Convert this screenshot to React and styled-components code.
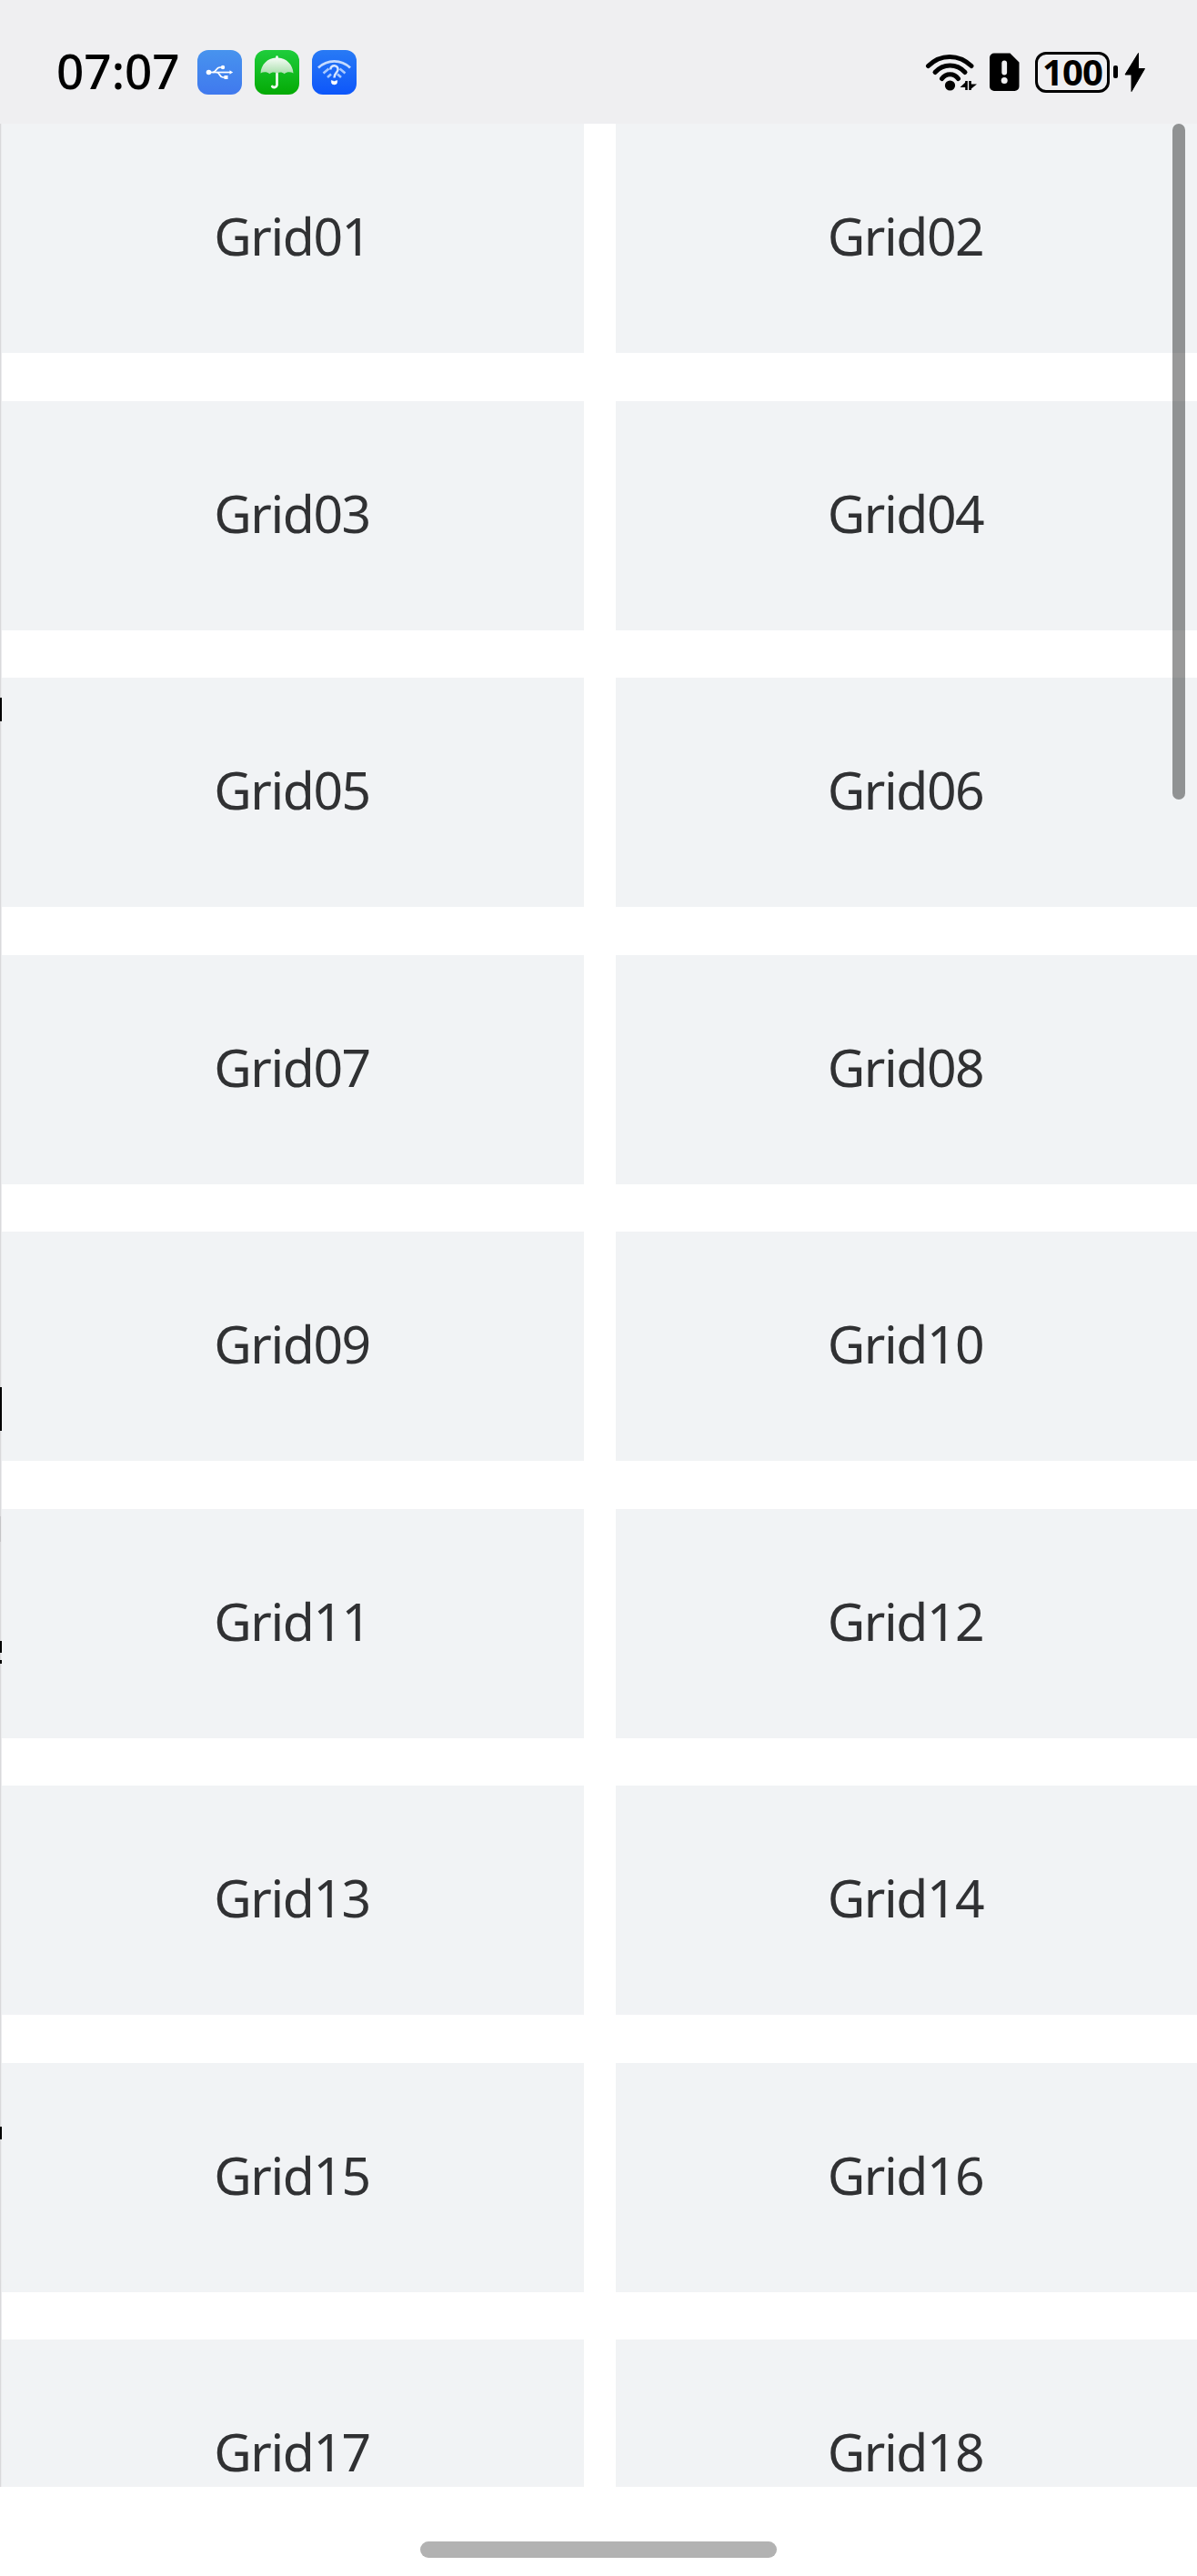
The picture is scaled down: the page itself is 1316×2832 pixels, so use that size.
import React from "react";
import styled, { createGlobalStyle } from "styled-components";

const Global = createGlobalStyle`
  * { box-sizing: border-box; }
  body { margin: 0; background: #fff; font-family: "Noto Sans", "Open Sans", sans-serif; }
`;

const Screen = styled.div`
  width: 1316px;
  height: 2832px;
  display: flex;
  flex-direction: column;
  overflow: hidden;
  background: #fff;
`;

const StatusBar = styled.header`
  height: 136px;
  flex: none;
  display: flex;
  align-items: center;
  justify-content: space-between;
  padding: 22px 57px 0 62px;
  background: #efeff1;
  color: #000;
`;

const StatusGroup = styled.div`
  display: flex;
  align-items: center;
`;

const Clock = styled.time`
  width: 155px;
  padding-bottom: 3px;
  font-size: 53px;
  font-weight: 500;
  line-height: 60px;
  letter-spacing: 0;
  white-space: nowrap;
`;

const AppBadge = styled.span`
  width: 49px;
  height: 49px;
  margin-right: 14px;
  border-radius: 12px;
  background: linear-gradient(${(p) => p.$from}, ${(p) => p.$to});
  svg { display: block; }
`;

const Battery = styled.div`
  width: 82px;
  height: 45px;
  margin-left: 17px;
  border: 3.5px solid #000;
  border-radius: 12px;
  display: flex;
  align-items: center;
  justify-content: center;
  font-size: 40px;
  line-height: 38px;
  font-weight: 700;
  letter-spacing: -0.8px;
`;

const BatteryTip = styled.span`
  width: 5px;
  height: 14px;
  margin: 0 7px 0 4px;
  border-radius: 2px;
  background: #000;
`;

const Content = styled.main`
  position: relative;
  display: flex;
  height: 2598px;
  overflow: hidden;
`;

const PreviousPage = styled.div`
  width: 2px;
  flex: none;
  background: linear-gradient(90deg, #d9d9db 50%, #ebebed 50%);
`;

const Sliver = styled.div`
  width: ${(p) => p.$width || 2}px;
  height: ${(p) => p.$height}px;
  margin-top: ${(p) => p.$gap}px;
  background: ${(p) => p.$color || "#000"};
`;

const Grid = styled.div`
  flex: 1;
  display: grid;
  grid-template-columns: 640px 639px;
  grid-auto-rows: 252px;
  gap: 52.5px 35px;
`;

const Cell = styled.div`
  display: flex;
  align-items: center;
  justify-content: center;
  padding: 0 2px 6px 0;
  background: #f1f3f5;
  color: #303133;
  font-size: 57px;
  letter-spacing: -1.4px;
`;

const ScrollThumb = styled.div`
  position: absolute;
  top: 0;
  right: 13px;
  width: 14px;
  height: 743px;
  border-radius: 7px;
  background: rgba(0, 0, 0, 0.4);
`;

const HomeArea = styled.footer`
  flex: 1;
  display: flex;
  justify-content: center;
  padding-top: 60px;
`;

const HomeBar = styled.div`
  width: 392px;
  height: 18px;
  border-radius: 9px;
  background: #b2b2b2;
`;

const UsbIcon = () => (
  <svg width="49" height="49" viewBox="0 0 49 49" fill="none" stroke="#fff" strokeWidth="1.7">
    <path d="M12 24.5H37" />
    <path d="M17 24.5C21 24.5 20 19 25 19H28M21 24.5C25 24.5 24 30 28 30H31" />
    <circle cx="12.5" cy="24.5" r="2.8" fill="#fff" stroke="none" />
    <circle cx="28" cy="19" r="2.2" fill="#fff" stroke="none" />
    <path d="M29.500 28h4v4h-4zM35.500 22.200l3.700 2.300-3.700 2.300z" fill="#fff" stroke="none" />
  </svg>
);

const UmbrellaIcon = () => (
  <svg width="49" height="49" viewBox="0 0 49 49" fill="none">
    <defs>
      <linearGradient id="canopy" x1="0" y1="0" x2="0" y2="1">
        <stop offset="0" stopColor="#fff" />
        <stop offset="1" stopColor="#a9dfac" />
      </linearGradient>
    </defs>
    <path d="M24.500 25V38.500a3 3 0 0 1-5.200 1.500" stroke="#eefaee" strokeWidth="2.800" strokeLinecap="round" />
    <path d="M23.200 8.500v-1a1.300 1.300 0 0 1 2.600 0v1C35 9 42 16 42.500 25.500C39.500 23.800 35 24 32.800 26.200C30 23.800 27 24 24.500 25.500C22 24 19 23.800 16.200 26.200C14 24 9.500 23.800 6.500 25.500C7 16 14 9 23.200 8.500Z" fill="url(#canopy)" />
  </svg>
);

const WifiHelpIcon = () => (
  <svg width="49" height="49" viewBox="0 0 49 49" fill="none" strokeLinecap="butt">
    <path d="M7 19.500C17 10 32 10 42 19.500" stroke="#c5dbff" strokeWidth="2.800" />
    <path d="M12.500 25.500L18.500 20.500M17 30L21 26.500M36.500 25.500L30.500 20.500M32 30L28 26.500" stroke="#a9c9ff" strokeWidth="2.600" />
    <path d="M20.300 21.500C20.300 15.500 29 16 28.500 21.500C28.200 25 24.500 25 24.500 30.500" stroke="#d7e6ff" strokeWidth="2.500" />
    <path d="M21.300 33.500l3.200 1 3.200-1v1.200a3.200 3.200 0 0 1-6.400 0z" fill="#fff" stroke="#fff" strokeWidth=".6" />
  </svg>
);

const WifiIcon = () => (
  <svg width="57" height="45" viewBox="0 0 57 45" fill="none" stroke="#000" strokeWidth="5" strokeLinecap="round">
    <path d="M3.500 15.500C17 2 37 2 51 15.500" />
    <path d="M11 22.500C20 12.500 35 12.500 44 22.500" />
    <path d="M18.500 29.500C23 23 32 23 36.500 29.500" />
    <circle cx="27.500" cy="37" r="5.600" fill="#000" stroke="none" />
    <path d="M45.500 32v10M49.500 32v10" strokeWidth="2.600" strokeLinecap="butt" />
    <path d="M46 32v7h-7.500zM49 42v-6.500h8z" fill="#000" stroke="none" />
  </svg>
);

const SimAlertIcon = () => (
  <svg width="33" height="45" viewBox="0 0 33 45">
    <path d="M5 1.500H22.500L32.500 11.500V38a5 5 0 0 1-5 5H5a5 5 0 0 1-5-5V6.500a5 5 0 0 1 5-5Z" fill="#000" />
    <rect x="13.300" y="9.500" width="5.800" height="16" rx="2.900" fill="#efeff1" />
    <circle cx="16.200" cy="31.500" r="3.500" fill="#efeff1" />
  </svg>
);

const BoltIcon = () => (
  <svg width="23" height="45" viewBox="0 0 23 45">
    <path d="M15.500 1.500L1 25H8V43.500L22.500 18.500H15.500Z" fill="#000" stroke="#000" strokeWidth="1" strokeLinejoin="round" />
  </svg>
);

const SpacedIcon = styled.span`
  display: flex;
  margin-left: ${(p) => p.$left || 0}px;
`;

const labels = Array.from({ length: 18 }, (_, i) => `Grid${String(i + 1).padStart(2, "0")}`);

export default function App() {
  return (
    <>
      <Global />
      <Screen>
        <StatusBar>
          <StatusGroup>
            <Clock>07:07</Clock>
            <AppBadge $from="#4793ee" $to="#4079ee"><UsbIcon /></AppBadge>
            <AppBadge $from="#1fcd3c" $to="#04aa05"><UmbrellaIcon /></AppBadge>
            <AppBadge $from="#287af5" $to="#0d56fa"><WifiHelpIcon /></AppBadge>
          </StatusGroup>
          <StatusGroup>
            <WifiIcon />
            <SpacedIcon $left={14}><SimAlertIcon /></SpacedIcon>
            <Battery>100</Battery>
            <BatteryTip />
            <BoltIcon />
          </StatusGroup>
        </StatusBar>
        <Content>
          <PreviousPage>
            <Sliver $gap={631} $height={26} />
            <Sliver $gap={732} $height={48} $width={1.5} />
            <Sliver $gap={94} $height={28} $width={1} $color="#c4c4c6" />
            <Sliver $gap={109} $height={13} $width={1.5} />
            <Sliver $gap={8} $height={4} $width={1.5} />
            <Sliver $gap={509} $height={14} $width={1.5} />
          </PreviousPage>
          <Grid>
            {labels.map((label) => <Cell key={label}>{label}</Cell>)}
          </Grid>
          <ScrollThumb />
        </Content>
        <HomeArea><HomeBar /></HomeArea>
      </Screen>
    </>
  );
}
